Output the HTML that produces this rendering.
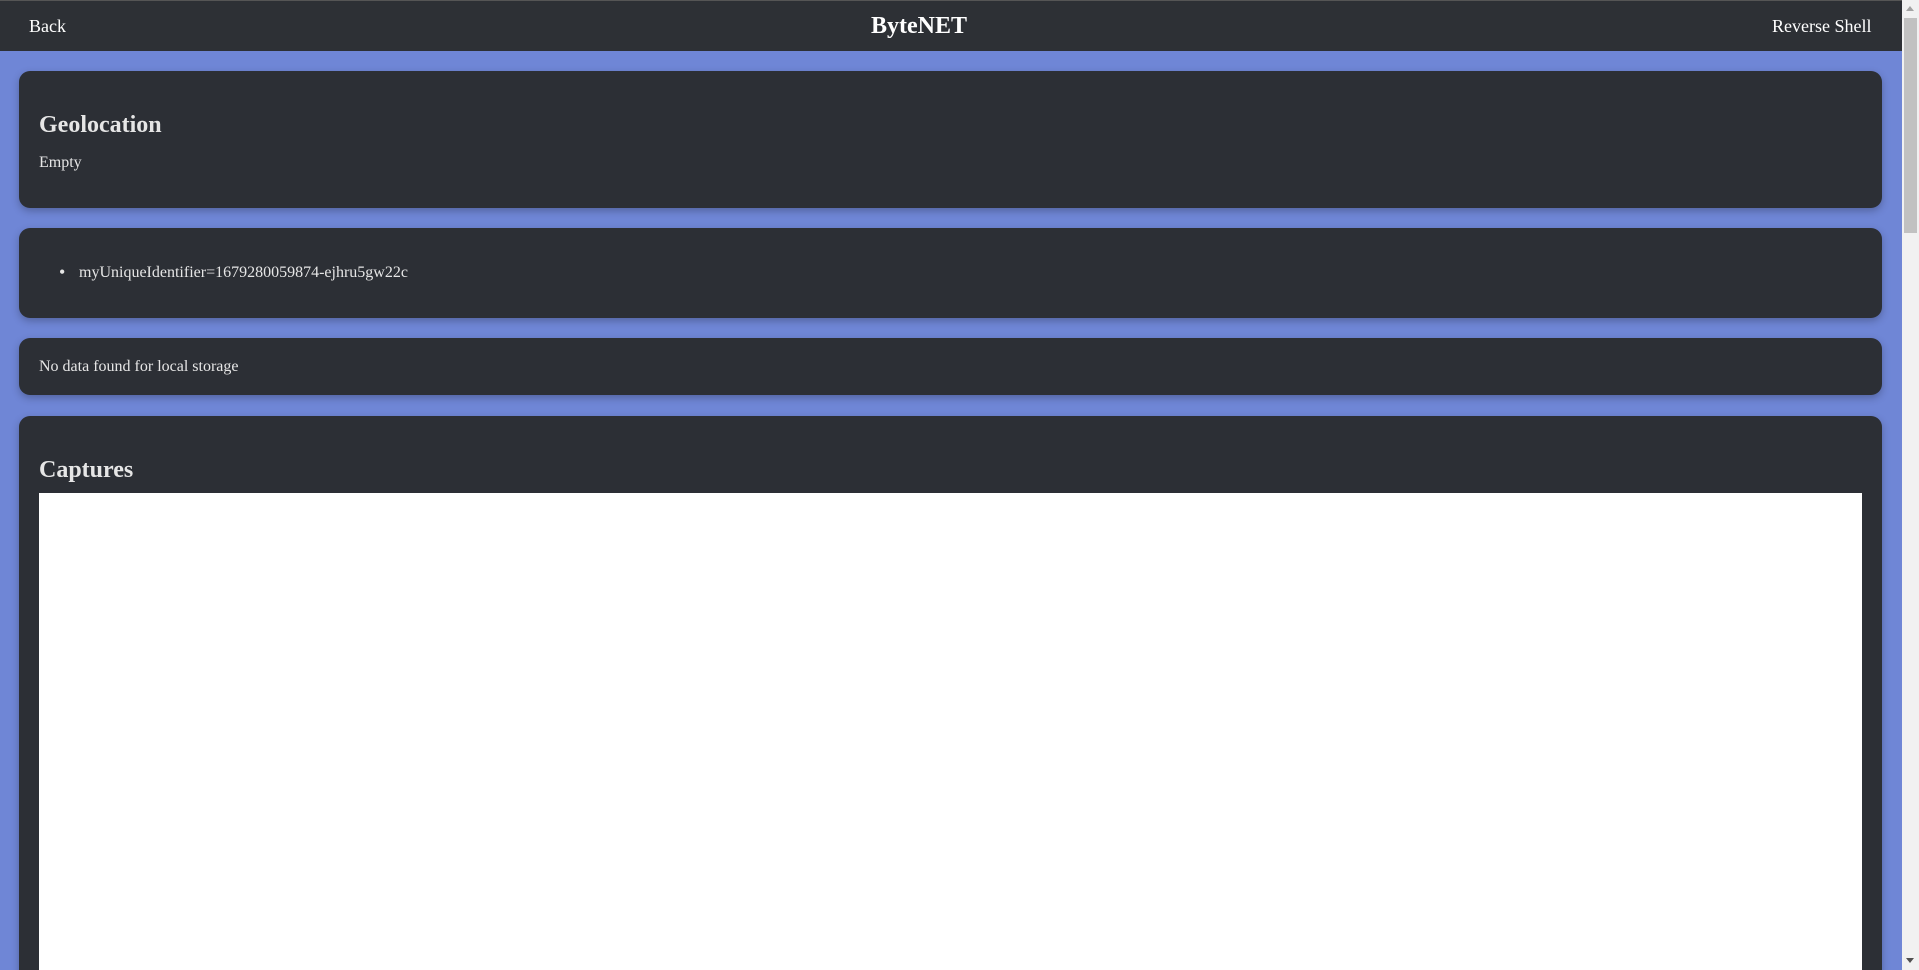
<!DOCTYPE html>
<html style="width:1919px;height:970px;overflow:hidden"><head><style>
body{margin:0;width:1919px;height:970px;overflow:hidden;background:#6f86d6;font-family:"Liberation Serif",serif;position:relative}
.hdr{position:absolute;left:0;top:0;width:1902px;height:51px;background:#2d3035;border-top:1px solid #555;box-sizing:border-box}
.hdr span{position:absolute;color:#fff;line-height:1;top:16px;font-size:18px}
.card{position:absolute;left:19px;width:1863px;background:#2c2f35;border-radius:11px;box-shadow:0 3px 8px rgba(0,0,0,.25);overflow:hidden}
.t{position:absolute;color:#e6e6e6;white-space:nowrap;line-height:1}
.sb{position:absolute;right:0;top:0;width:17px;height:970px;background:#f1f1f1}
</style></head><body>
<div class="hdr">
<span style="left:29px">Back</span>
<span style="left:871px;top:13px;font-size:24px;font-weight:bold">ByteNET</span>
<span style="left:1772px">Reverse Shell</span>
</div>
<div class="card" style="top:71px;height:137px">
<div class="t" style="left:20px;top:42px;font-size:24px;font-weight:bold">Geolocation</div>
<div class="t" style="left:20px;top:84px;font-size:16px">Empty</div>
</div>
<div class="card" style="top:228px;height:90px">
<div class="t" style="left:40px;top:35px;font-size:18px">•</div>
<div class="t" style="left:60px;top:37px;font-size:16px">myUniqueIdentifier=1679280059874-ejhru5gw22c</div>
</div>
<div class="card" style="top:338px;height:57px">
<div class="t" style="left:20px;top:21px;font-size:16px">No data found for local storage</div>
</div>
<div class="card" style="top:416px;height:560px;border-bottom-left-radius:0;border-bottom-right-radius:0">
<div class="t" style="left:20px;top:42px;font-size:24px;font-weight:bold">Captures</div>
<div style="position:absolute;left:20px;top:77px;width:1823px;height:500px;background:#fff"></div>
</div>
<div class="sb"><div style="position:absolute;left:2px;top:18px;width:13px;height:215px;background:#c1c1c1"></div>
<div style="position:absolute;left:4px;top:6px;width:0;height:0;border:4px solid transparent;border-bottom:5px solid #a3a3a3;border-top:0"></div>
<div style="position:absolute;left:4px;top:958px;width:0;height:0;border:4px solid transparent;border-top:5px solid #505050;border-bottom:0"></div></div>
</body></html>
